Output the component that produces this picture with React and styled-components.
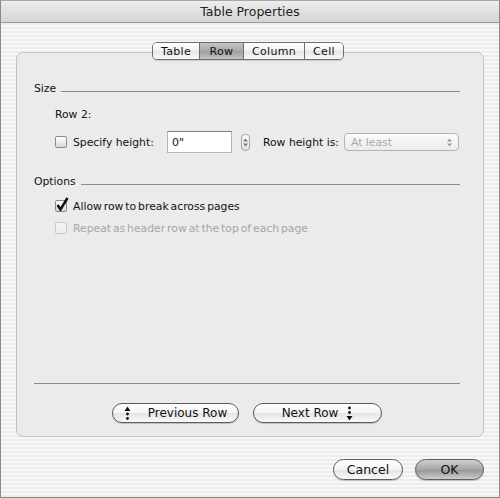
import styled, { createGlobalStyle } from 'styled-components';

const GlobalStyle = createGlobalStyle`
  body {
    margin: 0;
    background: #fff;
  }
`;

const tabs = [
  { label: 'Table', width: 46 },
  { label: 'Row', width: 44, active: true },
  { label: 'Column', width: 61 },
  { label: 'Cell', width: 39 },
];

const UpArrow = () => (
  <svg width="7" height="15" viewBox="0 0 7 15">
    <polygon points="0.5,5 3.5,0.5 6.5,5" fill="#111" />
    <circle cx="3.5" cy="8" r="1.4" fill="#111" />
    <circle cx="3.5" cy="12.5" r="1.4" fill="#111" />
  </svg>
);

const DownArrow = () => (
  <svg width="7" height="15" viewBox="0 0 7 15">
    <circle cx="3.5" cy="2" r="1.4" fill="#111" />
    <circle cx="3.5" cy="6.5" r="1.4" fill="#111" />
    <polygon points="0.5,10 3.5,14.5 6.5,10" fill="#111" />
  </svg>
);

const StepArrows = ({ color }) => (
  <svg width="5" height="9" viewBox="0 0 5 9">
    <polygon points="0,3.5 2.5,0.5 5,3.5" fill={color} />
    <polygon points="0,5.5 2.5,8.5 5,5.5" fill={color} />
  </svg>
);

const Checkbox = ({ checked, disabled }) => (
  <Box $disabled={disabled}>
    {checked && (
      <Check width="14" height="15" viewBox="0 0 14 15">
        <path d="M2.5 8 L5.5 12.5 L12.5 1" fill="none" stroke="#111" strokeWidth="2.5" />
      </Check>
    )}
  </Box>
);

const App = () => {
  return (
    <>
      <GlobalStyle />
      <Window>
        <TitleBar>Table Properties</TitleBar>
        <Body>
          <TabStrip>
            {tabs.map((t, i) => (
              <Tab key={t.label} $width={t.width} $active={t.active} $first={i === 0}>
                {t.label}
              </Tab>
            ))}
          </TabStrip>
          <GroupBox>
            <SectionHeader>
              <span>Size</span>
              <Rule />
            </SectionHeader>
            <Indented $top={13}>Row 2:</Indented>
            <ControlRow $top={8}>
              <Checkbox />
              <FieldLabel $width={94}>Specify height:</FieldLabel>
              <TextInput>0"</TextInput>
              <Stepper>
                <StepArrows color="#777" />
              </Stepper>
              <FieldLabel $width={81} $gap={13}>Row height is:</FieldLabel>
              <Select>
                <span>At least</span>
                <StepArrows color="#999" />
              </Select>
            </ControlRow>
            <SectionHeader $top={20}>
              <span>Options</span>
              <Rule />
            </SectionHeader>
            <OptionRow $top={11}>
              <Checkbox checked />
              <OptionText>Allow row to break across pages</OptionText>
            </OptionRow>
            <OptionRow $top={8}>
              <Checkbox disabled />
              <OptionText $disabled>Repeat as header row at the top of each page</OptionText>
            </OptionRow>
            <Spacer />
            <Separator />
            <NavRow>
              <PillButton $width={127} $gap={17}>
                <UpArrow />
                <span>Previous Row</span>
              </PillButton>
              <PillButton $width={129} $gap={8}>
                <span>Next Row</span>
                <DownArrow />
              </PillButton>
            </NavRow>
          </GroupBox>
          <Footer>
            <PillButton $width={70} $height={21} $size={12.5}>Cancel</PillButton>
            <PillButton $width={69} $height={21} $size={12.5} $default>OK</PillButton>
          </Footer>
        </Body>
      </Window>
    </>
  );
};

const Window = styled.div`
  width: 500px;
  height: 498px;
  box-sizing: border-box;
  border: 1px solid #8a8a8a;
  border-top-color: #a8a8a8;
  display: flex;
  flex-direction: column;
  overflow: hidden;
  font-family: "DejaVu Sans", "Noto Sans", sans-serif;
  color: #111;
  background: repeating-linear-gradient(
    to bottom,
    #f8f8f8 0px,
    #f8f8f8 2px,
    #ececec 2px,
    #ececec 4px
  );
`;

const TitleBar = styled.div`
  height: 22px;
  box-sizing: border-box;
  border-bottom: 1px solid #9c9c9c;
  background: linear-gradient(to bottom, #ededed, #d4d4d4);
  display: flex;
  align-items: center;
  justify-content: center;
  font-size: 12.5px;
  color: #222;
`;

const Body = styled.div`
  flex: 1;
  display: flex;
  flex-direction: column;
  padding: 19px 15px 0;
`;

const TabStrip = styled.div`
  align-self: flex-start;
  margin-left: 136px;
  display: flex;
  height: 18px;
  box-sizing: border-box;
  border: 1px solid #6e6e6e;
  border-radius: 5px;
  overflow: hidden;
  position: relative;
  z-index: 1;
  margin-bottom: -8px;
  box-shadow: 0 1px 1px rgba(0, 0, 0, 0.15);
`;

const Tab = styled.div`
  width: ${(p) => p.$width}px;
  box-sizing: border-box;
  border-left: ${(p) => (p.$first ? 'none' : '1px solid #6e6e6e')};
  display: flex;
  align-items: center;
  justify-content: center;
  font-size: 11px;
  letter-spacing: 0.3px;
  background: ${(p) =>
    p.$active
      ? 'linear-gradient(to bottom, #c4c4c4, #a9a9a9 50%, #9e9e9e 51%, #c2c2c2)'
      : 'linear-gradient(to bottom, #ffffff, #f3f3f3 50%, #e6e6e6 51%, #f8f8f8)'};
`;

const GroupBox = styled.div`
  height: 385px;
  box-sizing: border-box;
  border: 1px solid #c2c2c2;
  border-radius: 7px;
  background: #ebebeb;
  padding: 28px 23px 13px 17px;
  display: flex;
  flex-direction: column;
  font-size: 10.8px;
`;

const SectionHeader = styled.div`
  display: flex;
  align-items: center;
  height: 14px;
  margin-top: ${(p) => p.$top || 0}px;
`;

const Rule = styled.div`
  flex: 1;
  height: 1px;
  background: #8c8c8c;
  margin-left: 5px;
  margin-top: 6px;
`;

const Indented = styled.div`
  height: 14px;
  line-height: 14px;
  margin-left: 21px;
  margin-top: ${(p) => p.$top}px;
`;

const ControlRow = styled.div`
  display: flex;
  align-items: center;
  height: 24px;
  padding-left: 21px;
  margin-top: ${(p) => p.$top}px;
`;

const OptionRow = styled.div`
  display: flex;
  align-items: center;
  height: 14px;
  padding-left: 21px;
  margin-top: ${(p) => p.$top}px;
`;

const Box = styled.span`
  position: relative;
  width: 12px;
  height: 12px;
  flex: none;
  box-sizing: border-box;
  border: 1px solid ${(p) => (p.$disabled ? '#c8c8c8' : '#8a8a8a')};
  border-radius: 2px;
  background: ${(p) =>
    p.$disabled
      ? 'linear-gradient(to bottom, #f6f6f6, #ececec)'
      : 'linear-gradient(to bottom, #ffffff, #d8d8d8)'};
`;

const Check = styled.svg`
  position: absolute;
  left: -1px;
  top: -4px;
`;

const FieldLabel = styled.span`
  width: ${(p) => p.$width}px;
  margin-left: ${(p) => p.$gap || 6}px;
  flex: none;
`;

const OptionText = styled.span`
  margin-left: 6px;
  word-spacing: -1.5px;
  color: ${(p) => (p.$disabled ? '#a6a6a6' : '#111')};
`;

const TextInput = styled.div`
  width: 65px;
  height: 22px;
  box-sizing: border-box;
  background: #fff;
  border: 1px solid #b4b4b4;
  border-top-color: #7e7e7e;
  padding: 0 4px;
  display: flex;
  align-items: center;
  font-size: 11px;
`;

const Stepper = styled.div`
  width: 9px;
  height: 17px;
  margin-left: 9px;
  box-sizing: border-box;
  border: 1px solid #a4a4a4;
  border-radius: 4px;
  background: linear-gradient(to bottom, #fdfdfd, #e0e0e0);
  display: flex;
  align-items: center;
  justify-content: center;
`;

const Select = styled.div`
  width: 115px;
  height: 18px;
  box-sizing: border-box;
  border: 1px solid #b4b4b4;
  border-radius: 4px;
  background: linear-gradient(to bottom, #fbfbfb, #ebebeb);
  color: #a9a9a9;
  padding: 0 6px 0 6px;
  display: flex;
  align-items: center;
  justify-content: space-between;
`;

const Spacer = styled.div`
  flex: 1;
`;

const Separator = styled.div`
  height: 1px;
  background: #8c8c8c;
  margin-bottom: 19px;
`;

const NavRow = styled.div`
  display: flex;
  justify-content: center;
  gap: 14px;
`;

const PillButton = styled.div`
  width: ${(p) => p.$width}px;
  height: ${(p) => p.$height || 20}px;
  box-sizing: border-box;
  border: 1px solid #5c5c5c;
  border-radius: 11px;
  display: flex;
  align-items: center;
  justify-content: center;
  gap: ${(p) => p.$gap || 8}px;
  font-size: ${(p) => p.$size || 12}px;
  color: #111;
  box-shadow: 0 1px 1px rgba(0, 0, 0, 0.2);
  background: ${(p) =>
    p.$default
      ? 'linear-gradient(to bottom, #cfcfcf, #a6a6a6 50%, #939393 51%, #cdcdcd)'
      : 'linear-gradient(to bottom, #ffffff, #f4f4f4 50%, #e4e4e4 51%, #f9f9f9)'};
`;

const Footer = styled.div`
  display: flex;
  justify-content: flex-end;
  gap: 12px;
  margin-top: 22px;
`;

export default App;
